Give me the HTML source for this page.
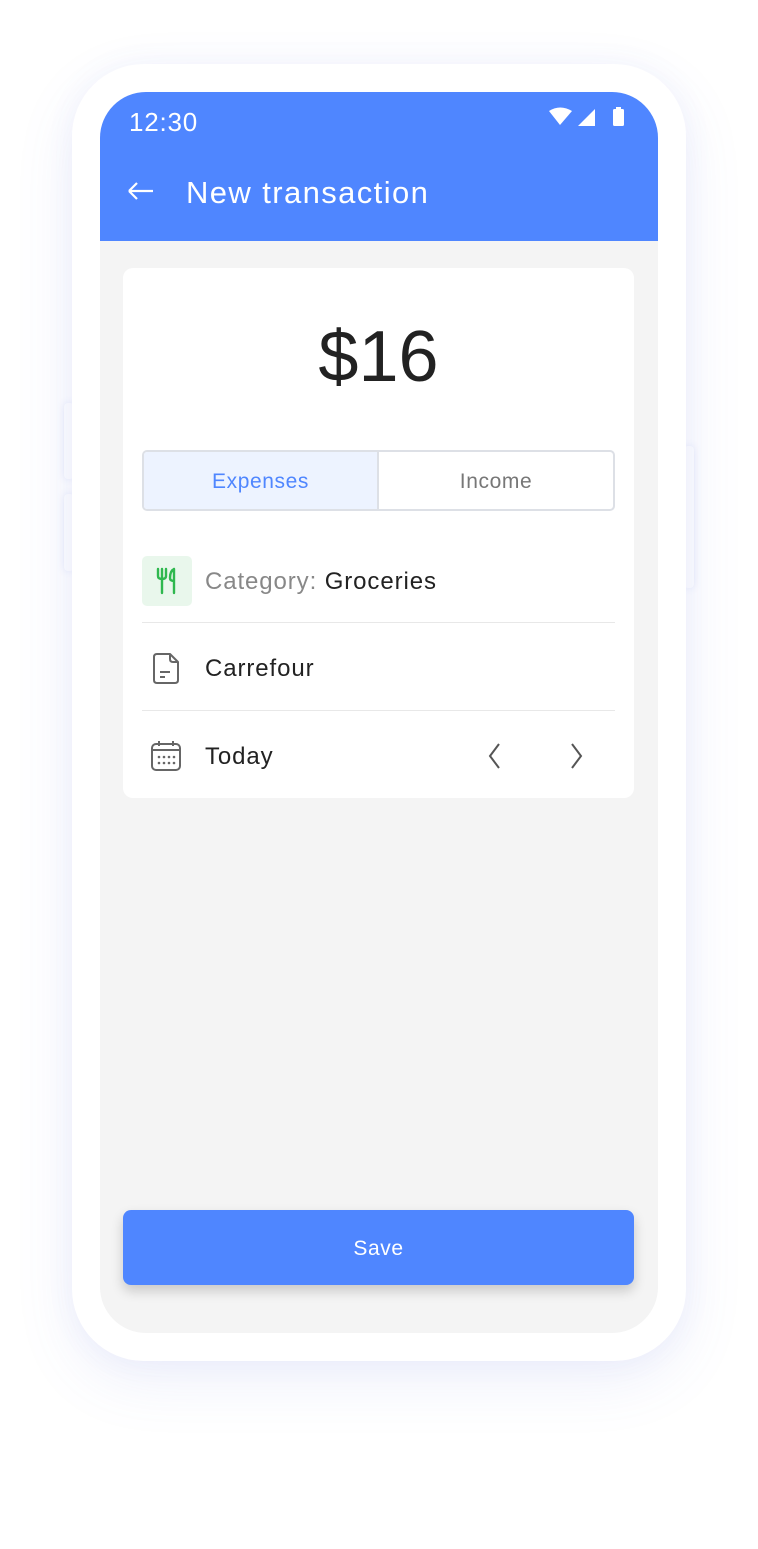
<!DOCTYPE html>
<html><head><style>
*{margin:0;padding:0;box-sizing:border-box}
body{width:758px;height:1549px;background:#fff;position:relative;font-family:"Liberation Sans",sans-serif;overflow:hidden}
.frame{position:absolute;left:72px;top:64px;width:614px;height:1297px;background:#fff;border-radius:72px;box-shadow:0 20px 60px rgba(90,110,220,0.10),0 0 30px rgba(90,110,220,0.06)}
.btn{position:absolute;background:#fff;border-radius:4px;box-shadow:0 0 8px rgba(90,110,220,0.14)}
.screen{position:absolute;left:100px;top:92px;width:558px;height:1241px;background:#f4f4f4;border-radius:46px;overflow:hidden}
.hdr{position:absolute;left:0;top:0;width:558px;height:149px;background:#4f86ff;color:#fff}
.card{position:absolute;left:23px;top:176px;width:511px;height:530px;background:#fff;border-radius:10px}
.row{position:absolute;left:19px;width:473px;height:1px;background:#e8e8e8}
.t{position:absolute;font-size:24px;color:#222;letter-spacing:0.9px}
</style></head><body>
<div class="btn" style="left:64px;top:403px;width:10px;height:76px"></div>
<div class="btn" style="left:64px;top:494px;width:10px;height:77px"></div>
<div class="btn" style="left:684px;top:446px;width:10px;height:142px"></div>
<div class="frame"></div>
<div class="screen">
 <div class="hdr">
  <div style="position:absolute;left:29px;top:15px;font-size:26px;letter-spacing:0.8px">12:30</div>
  <svg style="position:absolute;left:448px;top:14px" width="82" height="24" viewBox="0 0 82 24">
   <path d="M1 5 Q12 -2 24 5 L12 19 Z" fill="#fff"/>
   <path d="M30 20 L47 3 L47 20 Z" fill="#fff"/>
   <rect x="65" y="3" width="11" height="17" rx="1.5" fill="#fff"/><rect x="68" y="1" width="5" height="3" fill="#fff"/>
  </svg>
  <svg style="position:absolute;left:27px;top:89px" width="28" height="20" viewBox="0 0 28 20"><path d="M2 10 H26 M2 10 L10 2 M2 10 L10 18" stroke="#fff" stroke-width="2.2" fill="none"/></svg>
  <div style="position:absolute;left:86px;top:83px;font-size:31px;letter-spacing:1.4px">New transaction</div>
 </div>
 <div class="card">
  <div style="position:absolute;left:0;width:511px;top:48px;text-align:center;font-size:72px;color:#222">$16</div>
  <div style="position:absolute;left:19px;top:182px;width:473px;height:61px;border:2px solid #dde0e6;border-radius:5px;overflow:hidden">
   <div style="position:absolute;left:0;top:0;width:235px;height:57px;background:#edf3ff;border-right:2px solid #dde0e6;color:#4f86ff;font-size:21px;text-align:center;line-height:59px;letter-spacing:0.6px">Expenses</div>
   <div style="position:absolute;left:235px;top:0;width:234px;height:57px;color:#777;font-size:21px;text-align:center;line-height:59px;letter-spacing:0.6px">Income</div>
  </div>
  <div style="position:absolute;left:19px;top:288px;width:50px;height:50px;background:#e9f7ec;border-radius:5px"></div>
  <svg style="position:absolute;left:32px;top:299px" width="24" height="28" viewBox="0 0 24 28"><path d="M3 2 V9 Q3 12 7 12 Q11 12 11 9 V2 M7 2 V26 M19 2 V26 M19 2 Q15 4 15 11 Q15 14 19 14" stroke="#2fb84f" stroke-width="2.4" fill="none" stroke-linecap="round"/></svg>
  <div class="t" style="left:82px;top:300px"><span style="color:#888">Category:</span> Groceries</div>
  <div class="row" style="top:354px"></div>
  <svg style="position:absolute;left:28px;top:475px;display:none"></svg>
  <svg style="position:absolute;left:28px;top:384px" width="30" height="34" viewBox="0 0 30 34"><path d="M3 5 Q3 2 6 2 H19 L27 10 V28 Q27 31 24 31 H6 Q3 31 3 28 Z M19 2 V7 Q19 10 22 10 H27 M9 20 H19 M9 25 H14" stroke="#666" stroke-width="2" fill="none" stroke-linejoin="round"/></svg>
  <div class="t" style="left:82px;top:387px">Carrefour</div>
  <div class="row" style="top:442px"></div>
  <svg style="position:absolute;left:27px;top:471px" width="32" height="33" viewBox="0 0 32 33"><rect x="2" y="5" width="28" height="26" rx="4" stroke="#666" stroke-width="2" fill="none"/><path d="M2 11 H30 M9 2 V7 M23 2 V7" stroke="#666" stroke-width="2"/><g fill="#666"><circle cx="9" cy="18" r="1.3"/><circle cx="14" cy="18" r="1.3"/><circle cx="19" cy="18" r="1.3"/><circle cx="24" cy="18" r="1.3"/><circle cx="9" cy="24" r="1.3"/><circle cx="14" cy="24" r="1.3"/><circle cx="19" cy="24" r="1.3"/><circle cx="24" cy="24" r="1.3"/></g></svg>
  <div class="t" style="left:82px;top:475px">Today</div>
  <svg style="position:absolute;left:364px;top:474px" width="16" height="28" viewBox="0 0 16 28"><path d="M12 2 L3 14 L12 26" stroke="#555" stroke-width="2" fill="none"/></svg>
  <svg style="position:absolute;left:445px;top:474px" width="16" height="28" viewBox="0 0 16 28"><path d="M4 2 L13 14 L4 26" stroke="#555" stroke-width="2" fill="none"/></svg>
 </div>
 <div style="position:absolute;left:23px;top:1118px;width:511px;height:75px;background:#4f86ff;border-radius:8px;box-shadow:0 6px 12px rgba(0,0,0,0.18);color:#fff;font-size:21px;text-align:center;line-height:77px;letter-spacing:0.6px">Save</div>
</div>
</body></html>
